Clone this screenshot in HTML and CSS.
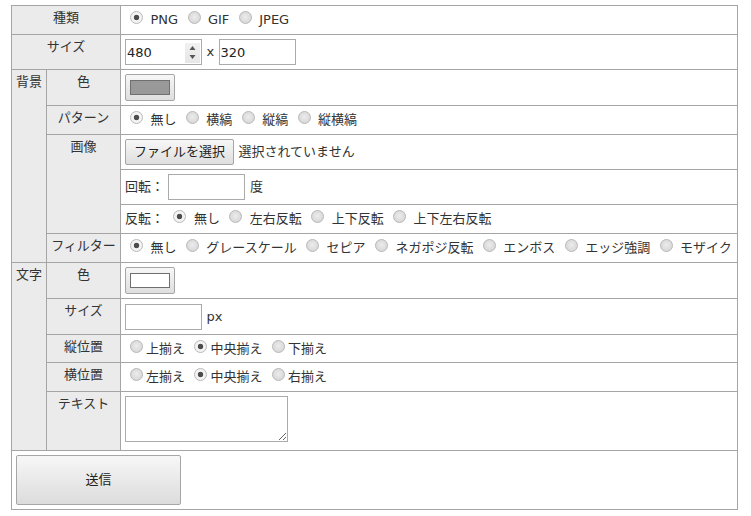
FILE: index.html
```html
<!DOCTYPE html>
<html lang="ja">
<head>
<meta charset="utf-8">
<title>画像生成</title>
<link rel="stylesheet" href="styles.css">
</head>
<body>
<form class="page">
<table class="tbl">
  <colgroup><col class="c1"><col class="c2"><col class="c3"></colgroup>
  <tr>
    <th colspan="2">種類</th>
    <td><label><input class="rd" type="radio" name="type" checked> PNG</label> <label><input class="rd" type="radio" name="type"> GIF</label> <label><input class="rd" type="radio" name="type"> JPEG</label></td>
  </tr>
  <tr>
    <th colspan="2">サイズ</th>
    <td><span class="num"><input class="num-in" type="text" value="480"><span class="spin"><svg width="15" height="20" viewBox="0 0 15 20"><polygon points="4.5,7 7.5,3 10.5,7" fill="#555"/><polygon points="4.5,12 10.5,12 7.5,16" fill="#555"/></svg></span></span> x <input class="txt" type="text" value="320"></td>
  </tr>
  <tr>
    <th rowspan="6">背景</th>
    <th>色</th>
    <td><button type="button" class="color"><span class="sw sw-gray"></span></button></td>
  </tr>
  <tr>
    <th>パターン</th>
    <td><label><input class="rd" type="radio" name="pat" checked> 無し</label> <label><input class="rd" type="radio" name="pat"> 横縞</label> <label><input class="rd" type="radio" name="pat"> 縦縞</label> <label><input class="rd" type="radio" name="pat"> 縦横縞</label></td>
  </tr>
  <tr>
    <th rowspan="3">画像</th>
    <td><button type="button" class="file">ファイルを選択</button> 選択されていません</td>
  </tr>
  <tr>
    <td>回転： <input class="txt" type="text"> 度</td>
  </tr>
  <tr>
    <td>反転： <label><input class="rd" type="radio" name="flip" checked> 無し</label> <label><input class="rd" type="radio" name="flip"> 左右反転</label> <label><input class="rd" type="radio" name="flip"> 上下反転</label> <label><input class="rd" type="radio" name="flip"> 上下左右反転</label></td>
  </tr>
  <tr>
    <th>フィルター</th>
    <td><label><input class="rd" type="radio" name="flt" checked> 無し</label> <label><input class="rd" type="radio" name="flt"> グレースケール</label> <label><input class="rd" type="radio" name="flt"> セピア</label> <label><input class="rd" type="radio" name="flt"> ネガポジ反転</label> <label><input class="rd" type="radio" name="flt"> エンボス</label> <label><input class="rd" type="radio" name="flt"> エッジ強調</label> <label><input class="rd" type="radio" name="flt"> モザイク</label></td>
  </tr>
  <tr>
    <th rowspan="5">文字</th>
    <th>色</th>
    <td><button type="button" class="color"><span class="sw sw-white"></span></button></td>
  </tr>
  <tr>
    <th>サイズ</th>
    <td class="tall"><input class="txt" type="text"> px</td>
  </tr>
  <tr>
    <th>縦位置</th>
    <td class="short"><label><input class="rd" type="radio" name="va">上揃え</label> <label><input class="rd" type="radio" name="va" checked>中央揃え</label> <label><input class="rd" type="radio" name="va">下揃え</label></td>
  </tr>
  <tr>
    <th>横位置</th>
    <td><label><input class="rd" type="radio" name="ha">左揃え</label> <label><input class="rd" type="radio" name="ha" checked>中央揃え</label> <label><input class="rd" type="radio" name="ha">右揃え</label></td>
  </tr>
  <tr>
    <th>テキスト</th>
    <td><textarea class="area"></textarea></td>
  </tr>
  <tr>
    <td colspan="3" class="send-cell"><button type="submit" class="send">送信</button></td>
  </tr>
</table>
</form>
</body>
</html>
```

FILE: styles.css
```css
body {
  margin: 0;
  background: #fff;
  color: #333;
  font-family: "DejaVu Sans", "Noto Sans CJK JP", sans-serif;
  font-size: 13px;
}

.page {
  margin: 0;
  padding: 5px 0 0 11px;
}

.tbl {
  border-collapse: collapse;
  table-layout: fixed;
  width: 727px;
}

.c1 { width: 35px; }
.c2 { width: 74px; }

.tbl th,
.tbl td {
  border: 1px solid #a5a5a5;
}

.tbl th {
  background: #ebebeb;
  font-weight: normal;
  text-align: center;
  vertical-align: top;
  padding: 3px 2px;
  line-height: 18px;
  white-space: nowrap;
}

.tbl td {
  padding: 4px;
  line-height: 20px;
  vertical-align: middle;
  white-space: nowrap;
  word-spacing: 0.3px;
}

.tbl td.tall { height: 27px; }
.tbl td.short { line-height: 19px; }

label { color: #333; }

.rd {
  -webkit-appearance: none;
  appearance: none;
  width: 13px;
  height: 13px;
  margin: 0 3px 0 5px;
  border: 1px solid #b9b9b9;
  border-radius: 50%;
  background: radial-gradient(circle at 50% 45%, #ececec 0, #d9d9d9 70%, #cfcfcf 100%);
  vertical-align: baseline;
  box-sizing: border-box;
}

.rd:checked {
  background: radial-gradient(circle, #4d4d4d 0, #4d4d4d 2.4px, #f3f3f3 3.1px, #f3f3f3 100%);
}

.txt,
.num {
  box-sizing: border-box;
  width: 77px;
  height: 26px;
  border: 1px solid #ababab;
  background: #fff;
  vertical-align: middle;
}

.txt {
  padding: 0 1px;
  font: inherit;
  color: #222;
  outline: none;
}

.num {
  display: inline-flex;
  align-items: center;
}

.num-in {
  flex: 1;
  width: 0;
  height: 100%;
  border: none;
  padding: 0 1px;
  font: inherit;
  color: #222;
  outline: none;
  background: transparent;
}

.spin {
  display: block;
  width: 15px;
  height: 20px;
  margin: 1px 1px 0 0;
  background: linear-gradient(#f1f1f1, #e6e6e6);
}

.spin svg { display: block; }

.color {
  box-sizing: border-box;
  width: 50px;
  height: 27px;
  padding: 0;
  border: 1px solid #a6a6a6;
  border-radius: 2px;
  background: linear-gradient(#f7f7f7, #dedede);
  display: inline-flex;
  align-items: center;
  justify-content: center;
  vertical-align: middle;
}

.sw {
  display: block;
  box-sizing: border-box;
  width: 40px;
  height: 15px;
  border: 1px solid #6f6f6f;
}

.sw-gray { background: #999; }
.sw-white { background: #fff; }

.file {
  box-sizing: border-box;
  height: 26px;
  width: 109px;
  padding: 0;
  border: 1px solid #a6a6a6;
  border-radius: 2px;
  background: linear-gradient(#f7f7f7, #dedede);
  font: inherit;
  color: #222;
  vertical-align: middle;
}

.area {
  display: block;
  box-sizing: border-box;
  width: 163px;
  height: 46px;
  margin: 0 0 4px;
  border: 1px solid #ababab;
  font: inherit;
  outline: none;
}

.send-cell { line-height: 1; }

.send {
  display: block;
  box-sizing: border-box;
  width: 165px;
  height: 50px;
  border: 1px solid #a6a6a6;
  border-radius: 2px;
  background: linear-gradient(#f7f7f7, #dcdcdc);
  font: inherit;
  color: #222;
}
```
